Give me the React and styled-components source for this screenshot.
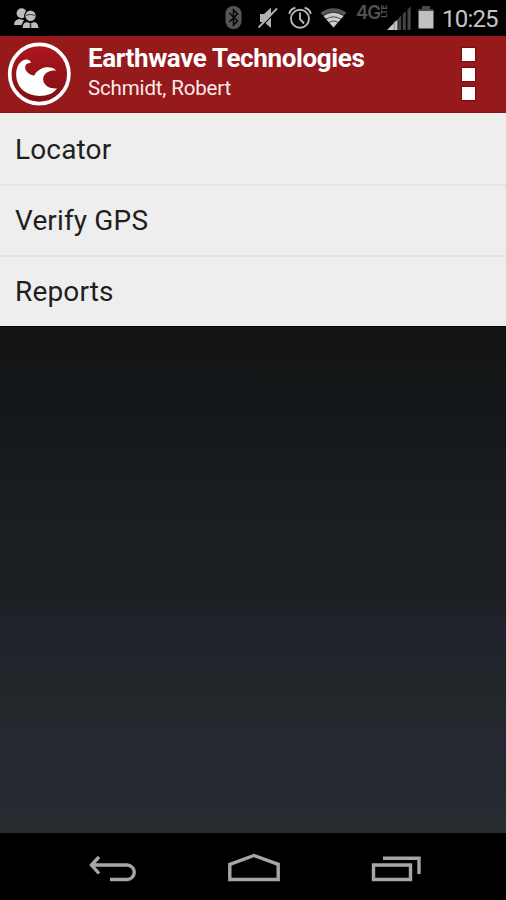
import React from 'react';
import styled, { createGlobalStyle } from 'styled-components';

const GlobalStyle = createGlobalStyle`
  * { box-sizing: border-box; }
  html, body { margin: 0; background: #000; }
  body { font-family: Roboto, "Noto Sans", sans-serif; }
`;

const Screen = styled.div`
  width: 506px;
  height: 900px;
  display: flex;
  flex-direction: column;
  overflow: hidden;
  background: linear-gradient(#0e0f10 0, #121314 330px, #14181a 420px, #1a1e20 510px, #1d2022 595px, #1f222a 625px, #20242b 665px, #212729 690px, #23282b 710px, #252830 730px, #262a31 800px, #272d30 833px);
`;

const StatusBar = styled.header`
  height: 36px;
  flex: none;
  display: flex;
  align-items: center;
  justify-content: space-between;
  padding: 0 8px 0 13px;
  background: #000;
`;

const StatusIcons = styled.div`
  display: flex;
  align-items: center;
`;

const StatusIcon = styled.svg`
  display: block;
  width: ${(p) => p.$w}px;
  height: 36px;
  margin-right: ${(p) => p.$gap || 0}px;
`;

const NetworkType = styled.div`
  display: flex;
  align-items: flex-start;
  width: 31px;
  height: 36px;
  padding-top: 5px;
  color: #525252;
  font-family: Inter, sans-serif;
`;

const Generation = styled.span`
  width: 24px;
  font-size: 18.5px;
  font-weight: 600;
  line-height: 15px;
  letter-spacing: -1px;
`;

const Standard = styled.span`
  writing-mode: vertical-rl;
  transform: rotate(180deg);
  font-size: 8px;
  font-weight: 700;
  line-height: 8px;
  letter-spacing: -0.4px;
`;

const Clock = styled.time`
  width: 56px;
  font-size: 24px;
  line-height: 36px;
  letter-spacing: -0.8px;
  white-space: nowrap;
  color: #c4c4c4;
  padding-top: 1px;
`;

const ActionBar = styled.div`
  height: 77px;
  flex: none;
  display: flex;
  align-items: flex-start;
  padding: 5px 31px 0 6px;
  background: #96191c;
  border-bottom: 1px solid #8a1518;
`;

const Logo = styled.svg`
  width: 66px;
  height: 66px;
  flex: none;
`;

const Heading = styled.div`
  flex: 1;
  padding: 1px 0 0 16px;
  color: #fff;
  white-space: nowrap;
`;

const Title = styled.h1`
  margin: 0;
  font-size: 26px;
  font-weight: 700;
  line-height: 32px;
  letter-spacing: -0.38px;
`;

const Subtitle = styled.div`
  font-size: 20.5px;
  line-height: 28px;
  letter-spacing: -0.15px;
  color: #faeaea;
`;

const Overflow = styled.button`
  display: flex;
  flex-direction: column;
  gap: 6.5px;
  padding: 7px 0 0;
  border: 0;
  background: none;
`;

const OverflowDot = styled.span`
  width: 13px;
  height: 13px;
  background: #fff;
  box-shadow: 0 0 1px 1px #84090d;
`;

const Menu = styled.ul`
  list-style: none;
  margin: 0;
  padding: 0;
  flex: none;
  background: #eee;
`;

const MenuItem = styled.li`
  height: 71px;
  display: flex;
  align-items: center;
  padding: 1px 15px 0;
  font-size: 28px;
  letter-spacing: 0.15px;
  color: #1f1f1f;

  & + & {
    padding-top: 0;
    border-top: 2px solid #e4e4e4;
  }
`;

const Content = styled.main`
  flex: 1;
  border-top: 1px solid #050606;
`;

const NavBar = styled.nav`
  height: 67px;
  flex: none;
  display: flex;
  justify-content: space-between;
  padding: 18px 85px 0 88px;
  background: #000;
`;

const NavIcon = styled.svg`
  width: ${(p) => p.$w}px;
  height: 32px;
  fill: none;
  stroke: #a6a6a6;
  stroke-width: 3.4;
`;

function SystemStatus() {
  return (
    <StatusBar>
      <StatusIcon $w={27} viewBox="0 0 27 36" fill="#bdbdbd">
        <circle cx="8.6" cy="13.2" r="5" />
        <path d="M1 25Q1 20 6 19L11 20 8.5 25Z" />
        <circle cx="17.5" cy="15.7" r="5.8" stroke="#000" strokeWidth="1.2" />
        <path d="M13 15.5q4-2 9 0" fill="none" stroke="#444" strokeWidth="1.2" />
        <path d="M9 28.5q0-6 5-7l3.5 1.5 3.5-1.5q5 1 5 7z" stroke="#000" strokeWidth="1" />
        <path d="M17.5 23.5v4.5" stroke="#333" strokeWidth="1.5" />
      </StatusIcon>
      <StatusIcons>
        <StatusIcon $w={17} $gap={15} viewBox="0 0 17 36">
          <rect x="0.5" y="6" width="16" height="23" rx="7.5" fill="#555" />
          <path d="M4.5 13l8 8-4 4V10l4 4-8 8" fill="none" stroke="#080808" strokeWidth="1.6" />
        </StatusIcon>
        <StatusIcon $w={21} $gap={10} viewBox="0 0 21 36">
          <path d="M3 14h4l7-6.5v20.5L7 22H3z" fill="#b0b0b0" />
          <path d="M3.2 27.8L20.7 10" stroke="#000" strokeWidth="1.3" />
          <path d="M1.5 27.5L20 8.5" stroke="#b0b0b0" strokeWidth="1.8" />
        </StatusIcon>
        <StatusIcon $w={24} $gap={8} viewBox="0 0 24 36" fill="none" stroke="#b8b8b8" strokeWidth="1.9">
          <circle cx="12" cy="18.7" r="9" />
          <path d="M12 12.5v6.7l4 4.3M1.3 14Q2 9 7.4 7.8M22.7 14Q22 9 16.6 7.8" />
        </StatusIcon>
        <StatusIcon $w={27} $gap={9} viewBox="0 0 27 36">
          <path d="M.5 12.5Q13.5 4 26.5 12.5L13.5 27.5Z" fill="#555" />
          <path d="M3.5 16Q13.5 9.5 23.5 16L13.5 27.5Z" fill="#cdcdcd" />
          <path d="M3.5 15.5Q13.5 9 23.5 15.5M6 19.2Q13.5 14.5 21 19.2M8.8 22.6Q13.5 19.5 18.2 22.6" fill="none" stroke="#333" strokeWidth="0.9" />
        </StatusIcon>
        <NetworkType>
          <Generation>4G</Generation>
          <Standard>LTE</Standard>
        </NetworkType>
        <StatusIcon $w={25} $gap={6} viewBox="0 0 25 36">
          <path d="M0 30L10.5 19.5V30z" fill="#c8c8c8" />
          <path d="M7.2 21V30" stroke="#777" strokeWidth="0.8" />
          <path d="M11.2 30V18.5l3-3V30zM15.8 30V14l3-3v19zM20.5 30V9.5l3.2-3V30z" fill="#444" />
        </StatusIcon>
        <StatusIcon $w={16} $gap={8} viewBox="0 0 16 36">
          <path d="M4 6h8v3h3.5v3H.5V9H4z" fill="#4a4a4a" />
          <path d="M.5 11h15v17.5H.5z" fill="#c0c0c0" />
        </StatusIcon>
        <Clock>10:25</Clock>
      </StatusIcons>
    </StatusBar>
  );
}

function WaveLogo() {
  return (
    <Logo viewBox="0 0 66 66">
      <defs>
        <linearGradient id="seal" x1="0" y1="0" x2="0" y2="1">
          <stop offset="0" stopColor="#ad171d" />
          <stop offset="1" stopColor="#7d1013" />
        </linearGradient>
      </defs>
      <circle cx="33.3" cy="33" r="29.6" fill="url(#seal)" stroke="#fff" strokeWidth="3.7" />
      <path
        fill="#fff"
        d="M25 21.8C24.2 18.5 20 17.6 16.3 19.8C11 23.5 9.5 30 10.5 37.5C12 47.5 21 54.8 33.5 55C41.5 55 48 52.3 51 47.3C46 48.2 40.5 46.2 38 41.8C36.2 37.5 37.5 33 42 31C44.5 29.7 47 29.4 50 29.5C47.5 26 40.5 25.2 35.5 27.6C31.5 29.8 29.5 32 28.3 34.5C24.5 34 21.2 31.8 19.8 29.2C18 25.5 20 21.8 25 21.8Z"
      />
    </Logo>
  );
}

export default function App() {
  return (
    <>
      <GlobalStyle />
      <Screen>
        <SystemStatus />
        <ActionBar>
          <WaveLogo />
          <Heading>
            <Title>Earthwave Technologies</Title>
            <Subtitle>Schmidt, Robert</Subtitle>
          </Heading>
          <Overflow aria-label="More options">
            <OverflowDot />
            <OverflowDot />
            <OverflowDot />
          </Overflow>
        </ActionBar>
        <Menu>
          {['Locator', 'Verify GPS', 'Reports'].map((label) => (
            <MenuItem key={label}>{label}</MenuItem>
          ))}
        </Menu>
        <Content />
        <NavBar>
          <NavIcon $w={48} viewBox="0 0 48 32">
            <path d="M2.5 14H39a7.2 7.2 0 0 1 0 14.5H22M11 6L3.5 14L11 22.5" />
          </NavIcon>
          <NavIcon $w={54} viewBox="0 0 54 32">
            <path d="M2.8 13.3L27 4.5L51.2 13.3V28.5H2.8Z" />
          </NavIcon>
          <NavIcon $w={50} viewBox="0 0 50 32">
            <path d="M2.5 14h37v14.5h-37zM12 7.2h36V23" />
          </NavIcon>
        </NavBar>
      </Screen>
    </>
  );
}
